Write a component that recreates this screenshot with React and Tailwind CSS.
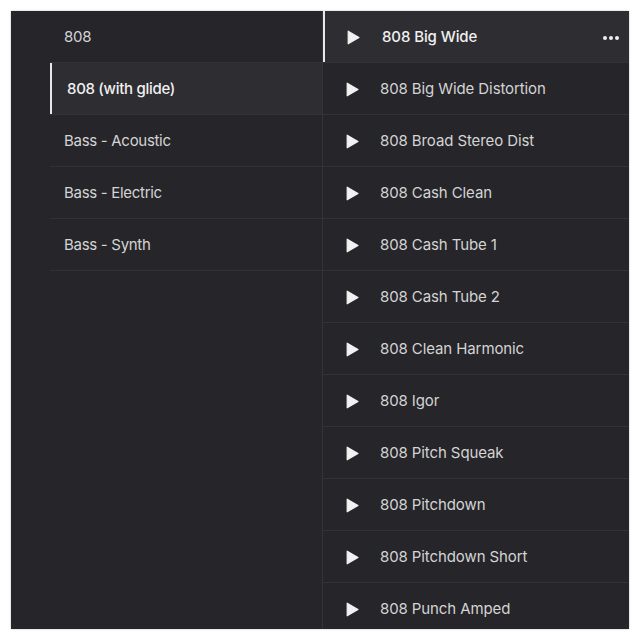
import React from "react";

const left = ["808", "808 (with glide)", "Bass - Acoustic", "Bass - Electric", "Bass - Synth"];
const right = [
  "808 Big Wide",
  "808 Big Wide Distortion",
  "808 Broad Stereo Dist",
  "808 Cash Clean",
  "808 Cash Tube 1",
  "808 Cash Tube 2",
  "808 Clean Harmonic",
  "808 Igor",
  "808 Pitch Squeak",
  "808 Pitchdown",
  "808 Pitchdown Short",
  "808 Punch Amped",
];

function Play() {
  return (
    <svg width="13" height="15" viewBox="0 0 13 15" className="shrink-0">
      <path d="M1.2 1.2 L12 7.5 L1.2 13.8 Z" fill="#f2f2f2" stroke="#f2f2f2" strokeWidth="1.2" strokeLinejoin="round" />
    </svg>
  );
}

export default function App() {
  return (
    <div className="w-[640px] h-[640px] bg-white p-[11px]" style={{ fontFamily: "Inter, 'Noto Sans', sans-serif" }}>
      <div className="w-[618px] h-[618px] bg-[#26252a] flex overflow-hidden shadow-[0_0_2px_rgba(0,0,0,0.25)]">
        <div className="w-[311px] shrink-0 pl-[39px]">
          {left.map((t, i) =>
            i === 1 ? (
              <div key={t} className="h-[52px] border-b border-[#323136] bg-[#2e2d32] flex items-center">
                <div className="w-[2px] h-full bg-[#e8e8e8]" />
                <span className="pl-[15px] pt-[2px] text-[15px] font-medium text-[#f0f0f0] tracking-[-0.3px]">{t}</span>
              </div>
            ) : (
              <div key={t} className="h-[52px] border-b border-[#323136] flex items-center pl-[14px]">
                <span className="pt-[2px] text-[15px] text-[#d4d4d4] tracking-[-0.3px]">{t}</span>
              </div>
            )
          )}
        </div>
        <div className="w-px shrink-0 bg-[#343338]" />
        <div className="flex-1 min-w-0">
          {right.map((t, i) =>
            i === 0 ? (
              <div key={t} className="h-[52px] border-b border-[#323136] bg-[#2e2d32] flex items-center">
                <div className="w-[2px] h-full bg-[#e8e8e8]" />
                <div className="pl-[22px] pt-[2px]"><Play /></div>
                <span className="pl-[22px] pt-[2px] text-[15px] font-medium text-[#f0f0f0] tracking-[-0.1px]">{t}</span>
                <div className="ml-auto mr-[10px] pt-[2px] flex gap-[2px]">
                  <span className="w-[4px] h-[4px] rounded-full bg-[#eeeeee]" />
                  <span className="w-[4px] h-[4px] rounded-full bg-[#eeeeee]" />
                  <span className="w-[4px] h-[4px] rounded-full bg-[#eeeeee]" />
                </div>
              </div>
            ) : (
              <div key={t} className="h-[52px] border-b border-[#323136] flex items-center pl-[23px]">
                <div className="pt-[2px]"><Play /></div>
                <span className="pl-[21px] pt-[2px] text-[15px] text-[#d4d4d4] tracking-[-0.1px]">{t}</span>
              </div>
            )
          )}
        </div>
      </div>
    </div>
  );
}
